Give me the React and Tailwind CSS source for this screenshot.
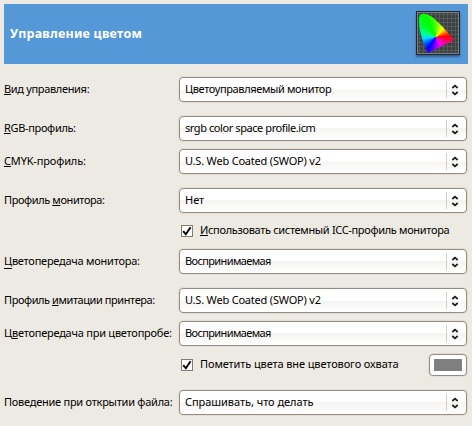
import React from 'react';

const FONT = "font-['Noto_Sans','Open_Sans',sans-serif] text-[11px] leading-[16px] text-black whitespace-pre";

function Label({ before = '', hot = '', after, className = '', line = 'underline-offset-[1px]' }) {
  return (
    <span className={`${FONT} mb-[2px] block ${className}`}>
      {before}
      {hot && <span className={`underline decoration-1 [text-decoration-skip-ink:none] ${line}`}>{hot}</span>}
      {after}
    </span>
  );
}

function Select({ children, className = '' }) {
  return (
    <div className="flex h-[25px] w-[288px] shrink-0 items-center rounded-[4px] border border-[#948c82] bg-linear-to-b from-white from-50% via-[#f5f4f2] via-50% to-white pl-[5px] shadow-[0_0_1px_1px_#e2ddd5]">
      <span className={`${FONT} mb-[2px] flex-1 ${className}`}>{children}</span>
      <span className="h-[17px] w-px bg-[#d6d0c2]" />
      <svg className="mr-[7px] ml-[4px] h-[12px] w-[8px]" viewBox="0 0 8 12" fill="none" stroke="#1c1c1c" strokeWidth="1.7">
        <path d="M1.3 4 4 1.6 6.7 4M1.3 8 4 10.4 6.7 8" />
      </svg>
    </div>
  );
}

function Row({ label, children, className = '' }) {
  return (
    <div className={`flex h-[25px] items-center ${className}`}>
      <div className="w-[175px] shrink-0">{label}</div>
      {children}
    </div>
  );
}

function Check() {
  return (
    <span className="flex h-[12px] w-[12px] shrink-0 border border-[#857c73] bg-white">
      <svg className="h-[10px] w-[10px]" viewBox="0 0 10 10" fill="none" stroke="#000" strokeWidth="1.9">
        <path d="M1.2 5.2 3.8 8.2 8.6 1.2" />
      </svg>
    </span>
  );
}

function GamutIcon() {
  return (
    <div className="h-[44px] w-[44px] border border-[#242729] bg-[#7d8080] p-px shadow-[0_2px_2px_rgba(20,50,90,0.55)]">
      <div className="h-[40px] w-[40px] bg-[#3c4041] bg-[linear-gradient(to_right,#56595a_1px,transparent_1px),linear-gradient(to_bottom,#56595a_1px,transparent_1px)] bg-[size:4px_4px] bg-[position:1px_1px]">
        <div className="h-[40px] w-[40px] bg-[conic-gradient(from_0deg_at_18px_24px,#50ff00_0deg,#a8ff00_18deg,#ffff00_40deg,#ff8000_62deg,#ff0000_85deg,#ff0060_108deg,#ff00d0_135deg,#d000ff_165deg,#5000ff_195deg,#0000ff_215deg,#0060ff_240deg,#00d8ff_262deg,#00ffa0_285deg,#00ff30_310deg,#00ff00_335deg,#50ff00_360deg)] [clip-path:path('M10_40C6_32_1_20_1_7C1_1_4_0_8_1C16_3_25_14_36_27L12_39Z')]" />
      </div>
    </div>
  );
}

export default function App() {
  return (
    <div className="h-[426px] w-[472px] overflow-hidden bg-[#edeae3] pt-[4px] pl-[4px]">
      <header className="flex h-[60px] w-[464px] items-center justify-between bg-[#5498d8] pr-[8px] pl-[6px]">
        <h1 className="font-['Noto_Sans','Open_Sans',sans-serif] text-[12.5px] leading-[18px] font-bold tracking-[0.22px] whitespace-pre text-white">Управление цветом</h1>
        <div className="-mt-[2px]"><GamutIcon /></div>
      </header>

      <Row className="mt-[13px]" label={<Label className="tracking-[-0.33px]" hot="В" after="ид управления:" />}>
        <Select className="tracking-[-0.36px]">Цветоуправляемый монитор</Select>
      </Row>
      <Row className="mt-[14px]" label={<Label className="tracking-[-0.33px]" hot="R" after="GB-профиль:" />}>
        <Select className="tracking-[-0.42px]">srgb color space profile.icm</Select>
      </Row>
      <Row className="mt-[8px]" label={<Label className="tracking-[-0.15px]" hot="C" after="MYK-профиль:" />}>
        <Select className="tracking-[-0.2px]">U.S. Web Coated (SWOP) v2</Select>
      </Row>
      <Row className="mt-[14px]" label={<Label className="tracking-[-0.4px]" before="Профиль " hot="м" after="онитора:" />}>
        <Select>Нет</Select>
      </Row>
      <div className="mt-[6px] flex h-[24px] items-center pl-[177px]">
        <Check />
        <Label className="ml-[7px] tracking-[-0.33px]" hot="И" after="спользовать системный ICC-профиль монитора" />
      </div>
      <Row className="mt-[6px]" label={<Label className="tracking-[-0.24px]" line="underline-offset-[3px]" hot="Ц" after="ветопередача монитора:" />}>
        <Select className="tracking-[-0.62px]">Воспринимаемая</Select>
      </Row>
      <Row className="mt-[14px]" label={<Label className="tracking-[-0.43px]" before="Профиль " hot="и" after="митации принтера:" />}>
        <Select className="tracking-[-0.2px]">U.S. Web Coated (SWOP) v2</Select>
      </Row>
      <Row className="mt-[8px]" label={<Label className="tracking-[-0.23px]" before="Ц" hot="в" after="етопередача при цветопробе:" />}>
        <Select className="tracking-[-0.62px]">Воспринимаемая</Select>
      </Row>
      <div className="mt-[8px] flex h-[22px] w-[463px] items-center pl-[177px]">
        <Check />
        <Label className="ml-[7px] flex-1 tracking-[-0.11px]" after="Пометить цвета вне цветового охвата" />
        <span className="flex h-[22px] w-[38px] items-center justify-center rounded-[4px] border border-[#948c82] bg-white shadow-[0_0_1px_1px_#e2ddd5]">
          <span className="h-[12px] w-[28px] bg-[#808080]" />
        </span>
      </div>
      <Row className="mt-[14px]" label={<Label className="tracking-[-0.25px]" after="Поведение при открытии файла:" />}>
        <Select className="tracking-[-0.05px]">Спрашивать, что делать</Select>
      </Row>
    </div>
  );
}
